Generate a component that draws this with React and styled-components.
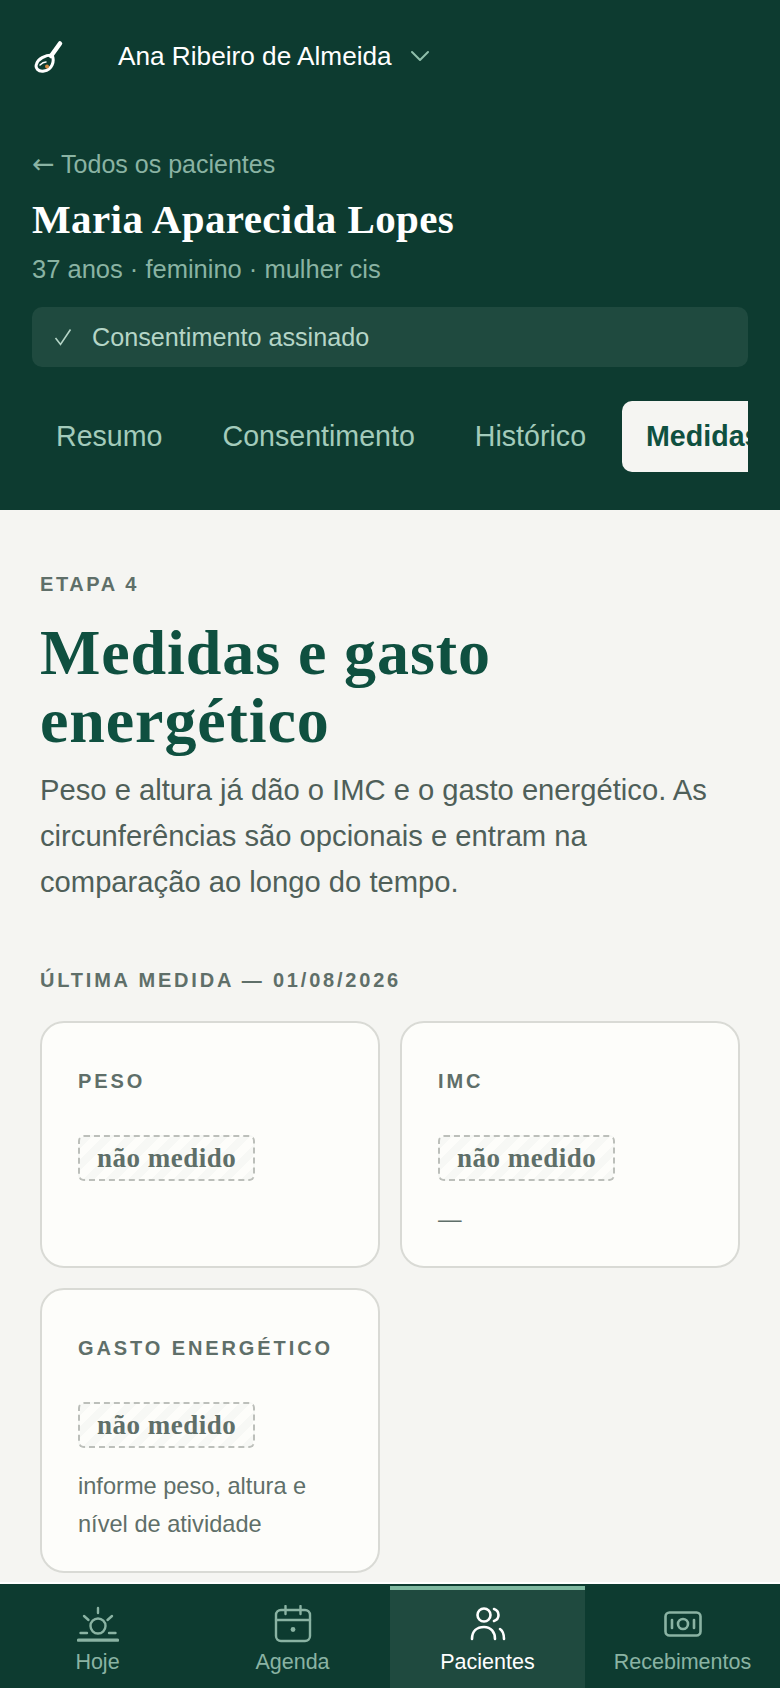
import React from "react";
import styled, { createGlobalStyle } from "styled-components";

const GlobalStyle = createGlobalStyle`
  * { box-sizing: border-box; }
  html, body { margin: 0; padding: 0; background: #f5f5f2; }
  body { font-family: "Liberation Sans", Arial, sans-serif; }
`;

const tabs = [
  { label: "Resumo" },
  { label: "Consentimento" },
  { label: "Histórico" },
  { label: "Medidas", active: true },
];

const cards = [
  { label: "PESO" },
  { label: "IMC", note: "—" },
  { label: "GASTO ENERGÉTICO", note: "informe peso, altura e nível de atividade" },
];

const Logo = () => (
  <svg width="32" height="34" viewBox="0 0 32 34" fill="none">
    <path d="M28 4.500 L19 17" stroke="#fff" strokeWidth="4.500" strokeLinecap="round" />
    <path d="M20 16 C 23 22 20 31 12 32 C 6 33 3 29 4.500 25 C 6 20 13 16 20 16 Z" stroke="#fff" strokeWidth="3" />
    <path d="M8 26 C 10 24 12 23 14 23" stroke="#fff" strokeWidth="1.500" strokeLinecap="round" />
    <circle cx="15" cy="27.500" r="2" fill="#d98b3f" />
  </svg>
);

const Chevron = () => (
  <svg width="20" height="12" viewBox="0 0 20 12" fill="none">
    <path d="M2 2 L10 10 L18 2" stroke="#8fbfab" strokeWidth="2" strokeLinecap="round" strokeLinejoin="round" />
  </svg>
);

const Check = () => (
  <svg width="18" height="18" viewBox="0 0 18 18" fill="none">
    <path d="M1.500 10 L6.500 16.500 L16.500 1.500" stroke="#b5d5c7" strokeWidth="1.600" />
  </svg>
);

const SunIcon = () => (
  <svg width="42" height="36" viewBox="0 0 42 36" fill="none" stroke="currentColor" strokeWidth="2.400" strokeLinecap="round">
    <circle cx="21" cy="20" r="7.500" />
    <path d="M21 2 V7" />
    <path d="M7 10 L11.500 14" />
    <path d="M35 10 L30.500 14" />
    <path d="M3.500 27 H10" />
    <path d="M32 27 H38.500" />
    <path d="M1.500 34.200 H40.500" strokeWidth="3.200" />
  </svg>
);

const CalendarIcon = () => (
  <svg width="38" height="38" viewBox="0 0 38 38" fill="none" stroke="currentColor" strokeWidth="2.400" strokeLinecap="round">
    <rect x="2" y="5" width="34" height="31" rx="5" />
    <path d="M2 15 H36" />
    <path d="M11.500 1 V9" />
    <path d="M26.500 1 V9" />
    <circle cx="19" cy="24.500" r="2.400" fill="currentColor" stroke="none" />
  </svg>
);

const PeopleIcon = () => (
  <svg width="38" height="36" viewBox="0 0 38 36" fill="none" stroke="currentColor" strokeWidth="2.600" strokeLinecap="round">
    <circle cx="15" cy="9" r="6.500" />
    <path d="M3 33 C 3 25 8 21 15 21 C 22 21 26 26 26 33" />
    <path d="M25 3 C 28 4 29.500 6.500 29.500 9 C 29.500 11.500 28 14 25 15" />
    <path d="M31 23 C 34 25 35 29 35 33" />
  </svg>
);

const MoneyIcon = () => (
  <svg width="38" height="26" viewBox="0 0 38 26" fill="none" stroke="currentColor" strokeWidth="2.600" strokeLinecap="round">
    <rect x="1.500" y="1.500" width="35" height="23" rx="4" />
    <circle cx="19" cy="13" r="5" />
    <path d="M8 9 V17" />
    <path d="M30 9 V17" />
  </svg>
);

const navItems = [
  { label: "Hoje", icon: <SunIcon /> },
  { label: "Agenda", icon: <CalendarIcon /> },
  { label: "Pacientes", icon: <PeopleIcon />, active: true },
  { label: "Recebimentos", icon: <MoneyIcon /> },
];

const App = () => {
  return (
    <Page>
      <GlobalStyle />
      <Header>
        <TopBar>
          <LogoSlot>
            <Logo />
          </LogoSlot>
          <Account>Ana Ribeiro de Almeida</Account>
          <Chevron />
        </TopBar>
        <BackLink>
          <BackArrow>←</BackArrow> Todos os pacientes
        </BackLink>
        <PatientName>Maria Aparecida Lopes</PatientName>
        <PatientMeta>37 anos · feminino · mulher cis</PatientMeta>
        <ConsentBar>
          <CheckSlot>
            <Check />
          </CheckSlot>
          Consentimento assinado
        </ConsentBar>
        <Tabs>
          {tabs.map((t) => (
            <Tab key={t.label} $active={t.active}>
              {t.label}
            </Tab>
          ))}
        </Tabs>
      </Header>
      <Main>
        <Eyebrow>ETAPA 4</Eyebrow>
        <Title>Medidas e gasto energético</Title>
        <Lead>
          Peso e altura já dão o IMC e o gasto energético. As circunferências são opcionais e
          entram na comparação ao longo do tempo.
        </Lead>
        <SectionLabel>ÚLTIMA MEDIDA — 01/08/2026</SectionLabel>
        <CardGrid>
          {cards.map((c) => (
            <Card key={c.label}>
              <CardLabel>{c.label}</CardLabel>
              <NotMeasured>não medido</NotMeasured>
              {c.note && <CardNote>{c.note}</CardNote>}
            </Card>
          ))}
        </CardGrid>
      </Main>
      <BottomNav>
        {navItems.map((n) => (
          <NavItem key={n.label} $active={n.active}>
            <NavIcon>{n.icon}</NavIcon>
            {n.label}
          </NavItem>
        ))}
      </BottomNav>
    </Page>
  );
};

export default App;

const Page = styled.div`
  width: 780px;
  height: 1688px;
  display: flex;
  flex-direction: column;
  overflow: hidden;
  background: #f5f5f2;
`;

const Header = styled.header`
  height: 510px;
  flex: none;
  background: #0d3b30;
  padding: 40px 32px 0;
`;

const TopBar = styled.div`
  display: flex;
  align-items: center;
  height: 32px;
  color: #fff;
`;

const LogoSlot = styled.div`
  width: 86px;
  display: flex;
`;

const Account = styled.div`
  font-size: 26.200px;
  margin-right: 18px;
`;

const BackLink = styled.div`
  margin-top: 76px;
  font-size: 25px;
  line-height: 32px;
  color: #8ab3a3;
`;

const BackArrow = styled.span`
  font-family: "DejaVu Sans", sans-serif;
  font-size: 27px;
  line-height: 20px;
`;

const PatientName = styled.h2`
  margin: 15px 0 0;
  font-family: "Liberation Serif", serif;
  font-size: 41px;
  line-height: 48px;
  letter-spacing: 0.4px;
  font-weight: 700;
  color: #fff;
`;

const PatientMeta = styled.div`
  margin-top: 10px;
  font-size: 25.500px;
  line-height: 32px;
  color: #8ab3a3;
`;

const ConsentBar = styled.div`
  margin-top: 22px;
  height: 60px;
  border-radius: 10px;
  background: #1f4a3f;
  color: #b5d5c7;
  font-size: 25.200px;
  display: flex;
  align-items: center;
  padding-left: 22px;
`;

const CheckSlot = styled.span`
  width: 38px;
  display: flex;
`;

const Tabs = styled.nav`
  margin-top: 34px;
  display: flex;
  overflow: hidden;
  gap: 12px;
`;

const Tab = styled.div`
  flex: none;
  height: 71px;
  padding: 0 24px;
  border-radius: 10px;
  display: flex;
  align-items: center;
  font-size: 28.600px;
  font-weight: ${(p) => (p.$active ? 700 : 400)};
  color: ${(p) => (p.$active ? "#0f5040" : "#a3cbbb")};
  background: ${(p) => (p.$active ? "#f5f5f2" : "transparent")};
`;

const Main = styled.main`
  flex: 1;
  min-height: 0;
  padding: 61px 40px 0;
`;

const Eyebrow = styled.div`
  font-size: 20px;
  line-height: 26px;
  font-weight: 700;
  letter-spacing: 2.600px;
  color: #5f6f69;
`;

const Title = styled.h1`
  margin: 22px 0 0;
  font-family: "Liberation Serif", serif;
  font-size: 64px;
  line-height: 68px;
  letter-spacing: 0.9px;
  font-weight: 700;
  color: #0f5040;
`;

const Lead = styled.p`
  margin: 12px 0 0;
  font-size: 29.200px;
  line-height: 46px;
  color: #4f5f59;
`;

const SectionLabel = styled.div`
  margin-top: 62px;
  font-size: 20px;
  line-height: 26px;
  font-weight: 700;
  letter-spacing: 2.800px;
  color: #5f6f69;
`;

const CardGrid = styled.div`
  margin-top: 28px;
  display: grid;
  grid-template-columns: 340px 340px;
  gap: 20px;
`;

const Card = styled.div`
  background: #fdfdfa;
  border: 2px solid #d9dad5;
  border-radius: 24px;
  padding: 46px 36px 28px;
  min-height: 247px;
`;

const CardLabel = styled.div`
  font-size: 20px;
  line-height: 24px;
  font-weight: 700;
  letter-spacing: 2.900px;
  color: #5f6f69;
`;

const NotMeasured = styled.div`
  display: inline-block;
  margin-top: 42px;
  height: 46px;
  padding: 0 17px;
  border: 2px dashed #bcbfba;
  border-radius: 6px;
  font-family: "Liberation Serif", serif;
  font-size: 27px;
  line-height: 42px;
  letter-spacing: 0.500px;
  font-weight: 700;
  color: #5f6f69;
  background: repeating-linear-gradient(-45deg, #f7f8f5 0 8px, #fdfdfa 8px 16px);
`;

const CardNote = styled.div`
  margin-top: 19px;
  font-size: 23.600px;
  line-height: 38px;
  color: #5f6f69;
`;

const BottomNav = styled.nav`
  flex: none;
  height: 106px;
  border-top: 2px solid #fff;
  background: #0d3b30;
  padding-top: 2px;
  display: grid;
  grid-template-columns: 195px 195px 195px 195px;
`;

const NavItem = styled.div`
  display: flex;
  flex-direction: column;
  align-items: center;
  font-size: 21.500px;
  line-height: 28px;
  color: ${(p) => (p.$active ? "#ffffff" : "#8ab3a3")};
  background: ${(p) => (p.$active ? "#1f4a3f" : "transparent")};
  border-top: 4px solid ${(p) => (p.$active ? "#7fb8a0" : "transparent")};
`;

const NavIcon = styled.div`
  height: 44px;
  margin-top: 12px;
  margin-bottom: 2px;
  display: flex;
  align-items: center;
  justify-content: center;
`;
